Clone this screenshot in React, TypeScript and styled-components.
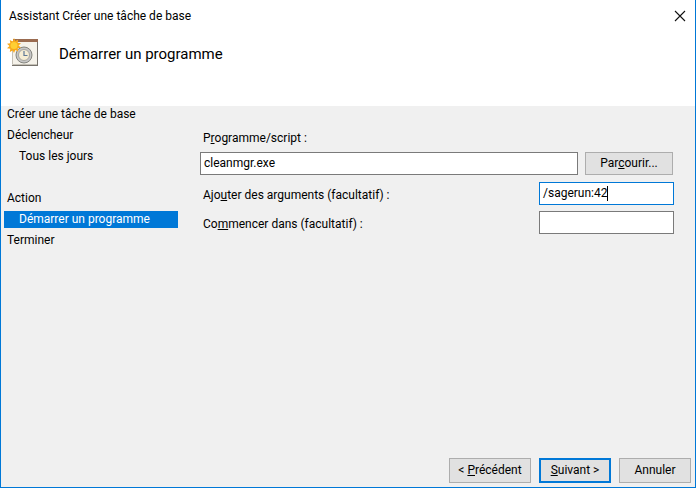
import React from 'react'
import styled, { createGlobalStyle } from 'styled-components'

const GlobalStyle = createGlobalStyle`
  html, body {
    margin: 0;
    padding: 0;
    background: #f0f0f0;
  }
  * {
    box-sizing: border-box;
  }
`

const Window = styled.div`
  width: 696px;
  height: 488px;
  display: flex;
  flex-direction: column;
  border: 1px solid #0078d7;
  border-top: 0;
  background: #f0f0f0;
  color: #000;
  font-family: Roboto, 'Open Sans', 'Liberation Sans', sans-serif;
  font-size: 12px;
  line-height: 16px;
  overflow: hidden;
`

const Header = styled.header`
  height: 106px;
  flex: none;
  background: #fff;
`

const TitleBar = styled.div`
  height: 32px;
  display: flex;
  align-items: center;
  justify-content: space-between;
  padding: 0 9px 0 8px;
`

const WindowTitle = styled.span`
  color: #000;
`

const CloseButton = styled.button`
  width: 12px;
  height: 12px;
  padding: 0;
  border: 0;
  background: none;
  display: block;
`

const Banner = styled.div`
  display: flex;
  align-items: flex-start;
  gap: 20px;
  padding: 5px 0 0 6px;
`

const PageTitle = styled.h1`
  margin: 6px 0 0;
  font-size: 15px;
  font-weight: 400;
  line-height: 22px;
`

const Body = styled.div`
  flex: 1;
  display: flex;
  min-height: 0;
`

const Nav = styled.nav`
  width: 177px;
  flex: none;
  display: flex;
  flex-direction: column;
`

const NavHeading = styled.div`
  height: 19px;
  padding: 0 0 4px 6px;
  display: flex;
  align-items: center;
`

const NavItem = styled.div<{ $child?: boolean; $active?: boolean; $gap?: boolean }>`
  height: ${({ $active }) => ($active ? '17px' : '21px')};
  margin: ${({ $active }) => ($active ? '2px 0' : '0')};
  margin-top: ${({ $gap, $active }) => ($gap ? '21px' : $active ? '2px' : '0')};
  margin-left: 3px;
  padding: 0 0 2px ${({ $child }) => ($child ? '15px' : '3px')};
  display: flex;
  align-items: center;
  background: ${({ $active }) => ($active ? '#0078d7' : 'transparent')};
  color: ${({ $active }) => ($active ? '#fff' : '#000')};
`

const Content = styled.main`
  flex: 1;
  display: flex;
  flex-direction: column;
  padding: 24px 21px 0 22px;
`

const FieldLabel = styled.label`
  display: block;
  height: 22px;
  padding-left: 3px;
`

const PathRow = styled.div`
  display: flex;
  gap: 7px;
  margin-bottom: 7px;
`

const TextBox = styled.div<{ $width: number; $focused?: boolean }>`
  width: ${({ $width }) => $width}px;
  height: 23px;
  flex: none;
  display: flex;
  align-items: center;
  padding: 0 0 2px 3px;
  background: #fff;
  border: 1px solid ${({ $focused }) => ($focused ? '#0078d7' : '#7a7a7a')};
`

const Caret = styled.span`
  display: inline-block;
  width: 1px;
  height: 15px;
  margin-top: 2px;
  background: #000;
`

const OptionRow = styled.div`
  display: flex;
  align-items: center;
  justify-content: space-between;
  margin-bottom: 6px;
`

const OptionLabel = styled.label`
  padding: 2px 0 0 3px;
`

const Button = styled.button<{ $width: number; $height?: number; $default?: boolean }>`
  width: ${({ $width }) => $width}px;
  height: ${({ $height }) => $height ?? 25}px;
  flex: none;
  padding: 0 0 2px;
  background: #e1e1e1;
  border: ${({ $default }) => ($default ? '2px solid #0078d7' : '1px solid #adadad')};
  color: #000;
  font: inherit;
`

const Footer = styled.footer`
  flex: none;
  height: 29px;
  display: flex;
  justify-content: flex-end;
  gap: 8px;
  padding-right: 4px;
`

const TaskIcon = () => (
  <svg width="32" height="30" viewBox="0 0 32 30" style={{ flex: 'none' }}>
    <path d="M5.500 4.500h25v23h-25z" fill="#f5f2ea" stroke="#c4c0b6" />
    <path d="M30 4h1v25H5v-1h25z" fill="#77736c" />
    <rect x="6" y="2" width="25" height="3" fill="#9a6b50" />
    <circle cx="17" cy="18" r="8" fill="#c6c6c6" stroke="#85857f" />
    <circle cx="17" cy="18" r="5.500" fill="#f6eed4" stroke="#a5a5a0" />
    <path d="M17 14v4.500h3.500" fill="none" stroke="#5f7a96" strokeWidth="1.200" />
    <path
      d="M7 1l1.300 3 2.900-1.500-.5 3.200 3.300.5-2.500 2.300 2.500 2.300-3.300.5.500 3.200-2.900-1.500L7 16l-1.300-2.500-2.900 1.500.5-3.200-3.300-.5 2.500-2.300L0 6.700l3.300-.5-.5-3.200 2.900 1.500z"
      fill="#f7a81b"
    />
    <circle cx="7" cy="8.500" r="3.500" fill="#ffcf33" />
  </svg>
)

const App = () => {
  return (
    <>
      <GlobalStyle />
      <Window>
        <Header>
          <TitleBar>
            <WindowTitle>Assistant Créer une tâche de base</WindowTitle>
            <CloseButton aria-label="Fermer">
              <svg width="12" height="12" viewBox="0 0 12 12">
                <path d="M1 1l10 10M11 1L1 11" stroke="#111" strokeWidth="1.100" fill="none" />
              </svg>
            </CloseButton>
          </TitleBar>
          <Banner>
            <TaskIcon />
            <PageTitle>Démarrer un programme</PageTitle>
          </Banner>
        </Header>
        <Body>
          <Nav>
            <NavHeading>Créer une tâche de base</NavHeading>
            <NavItem>Déclencheur</NavItem>
            <NavItem $child>Tous les jours</NavItem>
            <NavItem $gap>Action</NavItem>
            <NavItem $child $active>
              Démarrer un programme
            </NavItem>
            <NavItem>Terminer</NavItem>
          </Nav>
          <Content>
            <FieldLabel>
              P<u>r</u>ogramme/script :
            </FieldLabel>
            <PathRow>
              <TextBox $width={378}>cleanmgr.exe</TextBox>
              <Button $width={88} $height={23}>
                Par<u>c</u>ourir...
              </Button>
            </PathRow>
            <OptionRow>
              <OptionLabel>
                Ajo<u>u</u>ter des arguments (facultatif) :
              </OptionLabel>
              <TextBox $width={135} $focused>
                /sagerun:42
                <Caret />
              </TextBox>
            </OptionRow>
            <OptionRow>
              <OptionLabel>
                Co<u>m</u>mencer dans (facultatif) :
              </OptionLabel>
              <TextBox $width={135} />
            </OptionRow>
          </Content>
        </Body>
        <Footer>
          <Button $width={82}>
            &lt; <u>P</u>récédent
          </Button>
          <Button $width={72} $default>
            <u>S</u>uivant &gt;
          </Button>
          <Button $width={72}>Annuler</Button>
        </Footer>
      </Window>
    </>
  )
}

export default App
